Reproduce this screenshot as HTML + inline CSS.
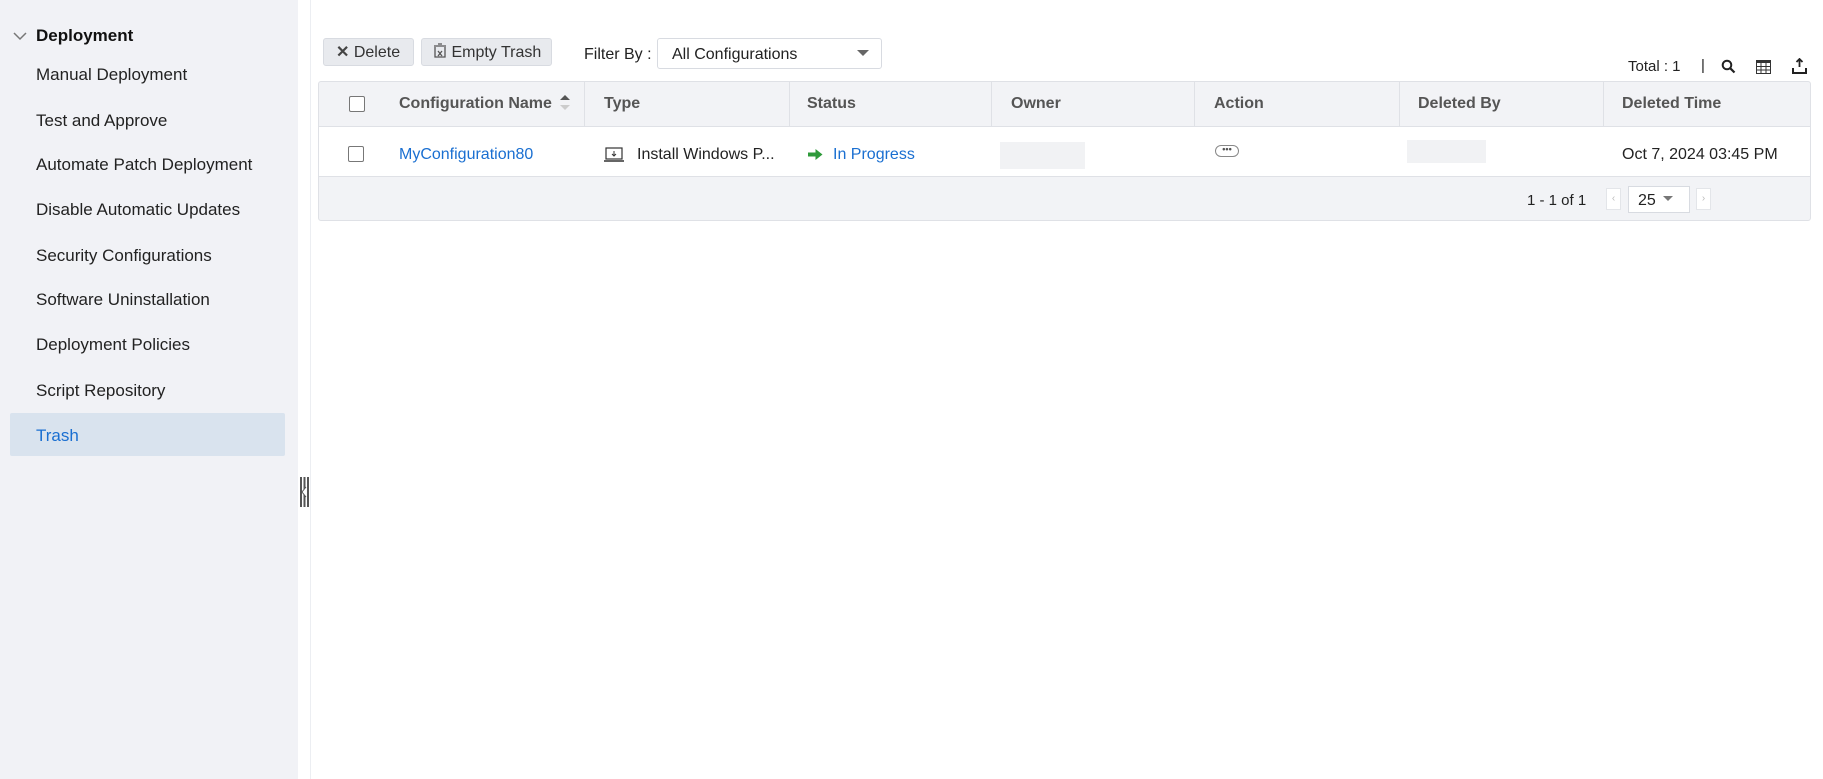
<!DOCTYPE html>
<html><head><meta charset="utf-8"><style>
*{box-sizing:border-box;margin:0;padding:0}
body{width:1823px;height:779px;overflow:hidden;background:#fff;font-family:"Liberation Sans",sans-serif;font-size:16px;color:#222;position:relative}
.abs{position:absolute}
.side{left:0;top:0;width:298px;height:779px;background:#f1f2f6}
.vline{left:310px;top:0;width:1px;height:779px;background:#eceef2}
.item{left:36px;font-size:17px;color:#222;line-height:20px}
.btn{background:#e8eaee;border:1px solid #d8dbe1;border-radius:3px;height:28px;line-height:26px;font-size:16px;color:#333}
.th{font-weight:bold;color:#555;font-size:16px;top:95px}
.cb{width:16px;height:16px;border:1.5px solid #777;border-radius:2px;background:#fff}
.cl{top:81px;width:1px;height:45px;background:#dfe1e6}
</style></head><body>
<div class="abs side"></div>
<div class="abs vline"></div>
<svg class="abs" style="left:12px;top:31px" width="16" height="10"><path d="M2 2 L8 8 L14 2" stroke="#777" stroke-width="1.5" fill="none"/></svg>
<div class="abs" style="left:36px;top:26px;font-size:17px;font-weight:bold;color:#111">Deployment</div>
<div class="abs item" style="top:65px">Manual Deployment</div>
<div class="abs item" style="top:111px">Test and Approve</div>
<div class="abs item" style="top:155px">Automate Patch Deployment</div>
<div class="abs item" style="top:200px">Disable Automatic Updates</div>
<div class="abs item" style="top:246px">Security Configurations</div>
<div class="abs item" style="top:290px">Software Uninstallation</div>
<div class="abs item" style="top:335px">Deployment Policies</div>
<div class="abs item" style="top:381px">Script Repository</div>
<div class="abs" style="left:10px;top:413px;width:275px;height:43px;background:#d9e3ee;border-radius:2px"></div>
<div class="abs item" style="top:426px;color:#1a6fd1">Trash</div>
<svg class="abs" style="left:300px;top:477px" width="9" height="30"><rect x="0" y="0" width="2" height="30" fill="#555"/><rect x="3.5" y="0" width="2" height="30" fill="#555"/><rect x="7" y="0" width="2" height="30" fill="#555"/><path d="M6 10 L2 15 L6 20" stroke="#555" fill="#fff" stroke-width="1"/></svg>

<div class="abs btn" style="left:323px;top:38px;width:91px;padding-left:12px;padding-top:1px"><span style="font-weight:bold;color:#444">✕</span>&nbsp;Delete</div>
<div class="abs btn" style="left:421px;top:38px;width:131px;padding-left:11px;padding-top:1px"><svg width="14" height="16" style="vertical-align:-2px"><path d="M1 3h12M5 1h4M2 4v10h10V4" stroke="#555" fill="none" stroke-width="1.3"/><path d="M5 8l4 5M9 8l-4 5" stroke="#555" stroke-width="1.3"/></svg> Empty Trash</div>
<div class="abs" style="left:584px;top:46px">Filter By :</div>
<div class="abs" style="left:657px;top:38px;width:225px;height:31px;border:1px solid #d8dbe1;border-radius:3px;padding:7px 0 0 14px">All Configurations</div>
<svg class="abs" style="left:857px;top:50px" width="12" height="8"><path d="M0 0H12L6 6Z" fill="#666"/></svg>
<div class="abs" style="left:1628px;top:58px;font-size:15px">Total : 1</div>
<div class="abs" style="left:1701px;top:57px;font-size:15px">|</div>
<svg class="abs" style="left:1721px;top:59px" width="15" height="15"><circle cx="6" cy="6" r="4.3" stroke="#222" stroke-width="2" fill="none"/><path d="M9.3 9.3l4.2 4.2" stroke="#222" stroke-width="2.2"/></svg>
<svg class="abs" style="left:1756px;top:60px" width="15" height="14"><rect x="0.5" y="0.5" width="14" height="13" fill="none" stroke="#333"/><rect x="0" y="0" width="15" height="3" fill="#333"/><path d="M5 3v11M10 3v11M0 6.5h15M0 10h15" stroke="#333"/></svg>
<svg class="abs" style="left:1792px;top:58px" width="15" height="16"><path d="M7.5 1v8M4.5 4L7.5 1l3 3" stroke="#222" stroke-width="1.8" fill="none"/><path d="M1 10v5h13v-5" stroke="#222" stroke-width="2" fill="none"/></svg>

<div class="abs" style="left:318px;top:81px;width:1493px;height:140px;border:1px solid #dfe1e6;border-radius:3px;background:#f2f3f6;overflow:hidden">
<div class="abs" style="left:0;top:44px;width:1493px;height:51px;background:#fff;border-top:1px solid #dfe1e6;border-bottom:1px solid #dfe1e6"></div>
</div>
<div class="abs cl" style="left:584px"></div><div class="abs cl" style="left:789px"></div><div class="abs cl" style="left:991px"></div><div class="abs cl" style="left:1194px"></div><div class="abs cl" style="left:1399px"></div><div class="abs cl" style="left:1603px"></div>
<div class="abs cb" style="left:349px;top:96px"></div>
<div class="abs th" style="left:399px">Configuration Name</div>
<svg class="abs" style="left:560px;top:94px" width="10" height="18"><path d="M0 6L5 1L10 6Z" fill="#555"/><path d="M0 11L5 16L10 11Z" fill="#ccc"/></svg>
<div class="abs th" style="left:604px">Type</div>
<div class="abs th" style="left:807px">Status</div>
<div class="abs th" style="left:1011px">Owner</div>
<div class="abs th" style="left:1214px">Action</div>
<div class="abs th" style="left:1418px">Deleted By</div>
<div class="abs th" style="left:1622px">Deleted Time</div>

<div class="abs cb" style="left:348px;top:146px"></div>
<div class="abs" style="left:399px;top:146px;color:#1a6fd1">MyConfiguration80</div>
<svg class="abs" style="left:603px;top:147px" width="22" height="17"><rect x="3" y="1" width="16" height="11" fill="none" stroke="#333" stroke-width="1.2"/><path d="M1 14h20" stroke="#333" stroke-width="1.5"/><path d="M11 4v5M9 7l2 2 2-2" stroke="#333" fill="none"/></svg>
<div class="abs" style="left:637px;top:146px">Install Windows P...</div>
<svg class="abs" style="left:808px;top:149px" width="15" height="11"><path d="M0 3.5h7.5V0l7 5.5-7 5.5V7.5H0Z" fill="#2e9a3a"/></svg>
<div class="abs" style="left:833px;top:146px;color:#1a6fd1">In Progress</div>
<div class="abs" style="left:1000px;top:142px;width:85px;height:27px;background:#f1f2f4"></div>
<div class="abs" style="left:1215px;top:145px;width:24px;height:12px;border:1.3px solid #888;border-radius:6px;font-size:9px;line-height:7px;text-align:center;color:#555;font-weight:bold">•••</div>
<div class="abs" style="left:1407px;top:140px;width:79px;height:23px;background:#f1f2f4"></div>
<div class="abs" style="left:1622px;top:146px">Oct 7, 2024 03:45 PM</div>

<div class="abs" style="left:1527px;top:192px;font-size:15px">1 - 1 of 1</div>
<div class="abs" style="left:1606px;top:188px;width:15px;height:22px;border:1px solid #e3e5e9;background:#fff;font-size:10px;color:#bbb;text-align:center;line-height:20px">‹</div>
<div class="abs" style="left:1628px;top:186px;width:62px;height:27px;border:1px solid #d8dbe1;background:#fff;padding:5px 0 0 9px;font-size:16px">25</div>
<svg class="abs" style="left:1663px;top:196px" width="10" height="6"><path d="M0 0H10L5 5Z" fill="#777"/></svg>
<div class="abs" style="left:1696px;top:188px;width:15px;height:22px;border:1px solid #e3e5e9;background:#fff;font-size:10px;color:#bbb;text-align:center;line-height:20px">›</div>
</body></html>
